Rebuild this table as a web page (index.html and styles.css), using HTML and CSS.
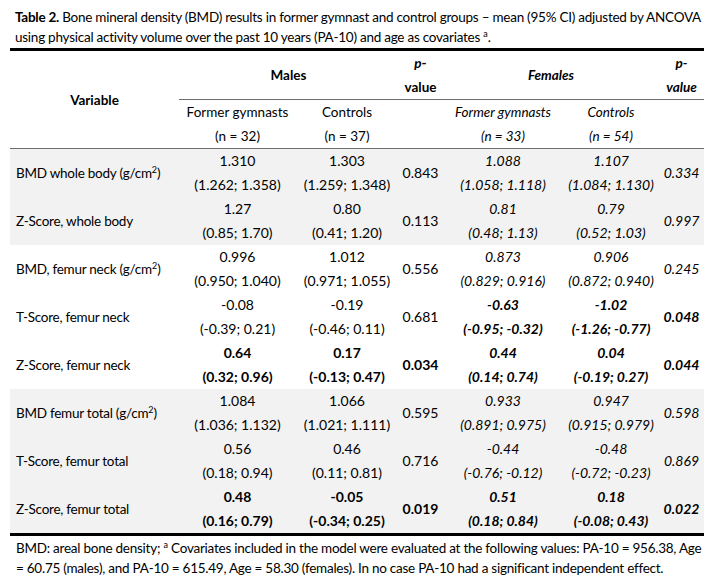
FILE: index.html
```html
<!DOCTYPE html>
<html lang="en">
<head>
<meta charset="utf-8">
<title>Table 2. Bone mineral density</title>
<link rel="stylesheet" href="styles.css">
</head>
<body>
<div class="page">
  <p class="caption"><b>Table 2.</b> Bone mineral density (BMD) results in former gymnast and control groups – mean (95% CI) adjusted by ANCOVA<br>using physical activity volume over the past 10 years (PA-10) and age as covariates <sup>a</sup>.</p>
  <table class="data">
    <colgroup>
      <col class="c-var"><col class="c-mfg"><col class="c-mct"><col class="c-p"><col class="c-ffg"><col class="c-fct"><col class="c-p">
    </colgroup>
    <thead>
      <tr class="h1">
        <th rowspan="2" class="var-h">Variable</th>
        <th colspan="2" class="rule">Males</th>
        <th class="rule"><i>p</i>-<br>value</th>
        <th colspan="2" class="rule fem">Females</th>
        <th class="rule fem">p-<br>value</th>
      </tr>
      <tr class="h2">
        <td>Former gymnasts<br>(n = 32)</td>
        <td>Controls<br>(n = 37)</td>
        <td></td>
        <td class="fem">Former gymnasts<br>(n = 33)</td>
        <td class="fem">Controls<br>(n = 54)</td>
        <td></td>
      </tr>
    </thead>
    <tbody>
      <tr class="shade">
        <td class="var">BMD whole body (g/cm<sup>2</sup>)</td>
        <td>1.310<br>(1.262; 1.358)</td>
        <td>1.303<br>(1.259; 1.348)</td>
        <td>0.843</td>
        <td class="fem">1.088<br>(1.058; 1.118)</td>
        <td class="fem">1.107<br>(1.084; 1.130)</td>
        <td class="fem">0.334</td>
      </tr>
      <tr class="shade">
        <td class="var">Z-Score, whole body</td>
        <td>1.27<br>(0.85; 1.70)</td>
        <td>0.80<br>(0.41; 1.20)</td>
        <td>0.113</td>
        <td class="fem">0.81<br>(0.48; 1.13)</td>
        <td class="fem">0.79<br>(0.52; 1.03)</td>
        <td class="fem">0.997</td>
      </tr>
      <tr>
        <td class="var">BMD, femur neck (g/cm<sup>2</sup>)</td>
        <td>0.996<br>(0.950; 1.040)</td>
        <td>1.012<br>(0.971; 1.055)</td>
        <td>0.556</td>
        <td class="fem">0.873<br>(0.829; 0.916)</td>
        <td class="fem">0.906<br>(0.872; 0.940)</td>
        <td class="fem">0.245</td>
      </tr>
      <tr>
        <td class="var">T-Score, femur neck</td>
        <td>-0.08<br>(-0.39; 0.21)</td>
        <td>-0.19<br>(-0.46; 0.11)</td>
        <td>0.681</td>
        <td class="fem sig">-0.63<br>(-0.95; -0.32)</td>
        <td class="fem sig">-1.02<br>(-1.26; -0.77)</td>
        <td class="fem sig">0.048</td>
      </tr>
      <tr>
        <td class="var">Z-Score, femur neck</td>
        <td class="sig">0.64<br>(0.32; 0.96)</td>
        <td class="sig">0.17<br>(-0.13; 0.47)</td>
        <td class="sig">0.034</td>
        <td class="fem sig">0.44<br>(0.14; 0.74)</td>
        <td class="fem sig">0.04<br>(-0.19; 0.27)</td>
        <td class="fem sig">0.044</td>
      </tr>
      <tr class="shade">
        <td class="var">BMD femur total (g/cm<sup>2</sup>)</td>
        <td>1.084<br>(1.036; 1.132)</td>
        <td>1.066<br>(1.021; 1.111)</td>
        <td>0.595</td>
        <td class="fem">0.933<br>(0.891; 0.975)</td>
        <td class="fem">0.947<br>(0.915; 0.979)</td>
        <td class="fem">0.598</td>
      </tr>
      <tr class="shade">
        <td class="var">T-Score, femur total</td>
        <td>0.56<br>(0.18; 0.94)</td>
        <td>0.46<br>(0.11; 0.81)</td>
        <td>0.716</td>
        <td class="fem">-0.44<br>(-0.76; -0.12)</td>
        <td class="fem">-0.48<br>(-0.72; -0.23)</td>
        <td class="fem">0.869</td>
      </tr>
      <tr class="shade">
        <td class="var">Z-Score, femur total</td>
        <td class="sig">0.48<br>(0.16; 0.79)</td>
        <td class="sig">-0.05<br>(-0.34; 0.25)</td>
        <td class="sig">0.019</td>
        <td class="fem sig">0.51<br>(0.18; 0.84)</td>
        <td class="fem sig">0.18<br>(-0.08; 0.43)</td>
        <td class="fem sig">0.022</td>
      </tr>
    </tbody>
  </table>
  <p class="note">BMD: areal bone density; <sup>a</sup> Covariates included in the model were evaluated at the following values: PA-10 = 956.38, Age<br>= 60.75 (males), and PA-10 = 615.49, Age = 58.30 (females). In no case PA-10 had a significant independent effect.</p>
</div>
</body>
</html>
```
FILE: styles.css
```css
html, body {
  margin: 0;
  padding: 0;
  background: #ffffff;
}
body {
  font-family: "Lato", "Liberation Sans", sans-serif;
  font-size: 13.5px;
  color: #000000;
}
.page {
  padding: 7px 10px 0 10px;
}
.caption {
  margin: 0;
  padding: 0 0 1px 5px;
  line-height: 20px;
  letter-spacing: -0.25px;
  white-space: nowrap;
}
sup {
  font-size: 9px;
  line-height: 0;
  vertical-align: 5px;
  letter-spacing: 0;
}
.data {
  width: 694px;
  border-collapse: collapse;
  table-layout: fixed;
  line-height: 24px;
  border-top: 3px solid #000;
  border-bottom: 3px solid #000;
}
.c-var { width: 169px; }
.c-mfg { width: 117px; }
.c-mct { width: 102px; }
.c-p { width: 45px; }
.c-ffg { width: 120px; }
.c-fct { width: 96px; }
.data th,
.data td {
  padding: 0;
  text-align: center;
  vertical-align: middle;
  white-space: nowrap;
}
.data th {
  font-weight: bold;
}
.data th.rule {
  border-bottom: 1px solid #6e6e6e;
}
.data .h2 td,
.data .var-h {
  border-bottom: 1px solid #6e6e6e;
}
.data tbody td {
  font-size: 14px;
}
.data tbody td.var {
  font-size: 13.5px;
  text-align: left;
  padding-left: 6px;
  letter-spacing: -0.25px;
}
.fem {
  font-style: italic;
}
.sig {
  font-weight: bold;
}
.shade td {
  background: #f2f2f2;
}
.note {
  margin: 0;
  padding: 2px 0 0 6px;
  line-height: 20px;
  letter-spacing: -0.25px;
  white-space: nowrap;
}
```
